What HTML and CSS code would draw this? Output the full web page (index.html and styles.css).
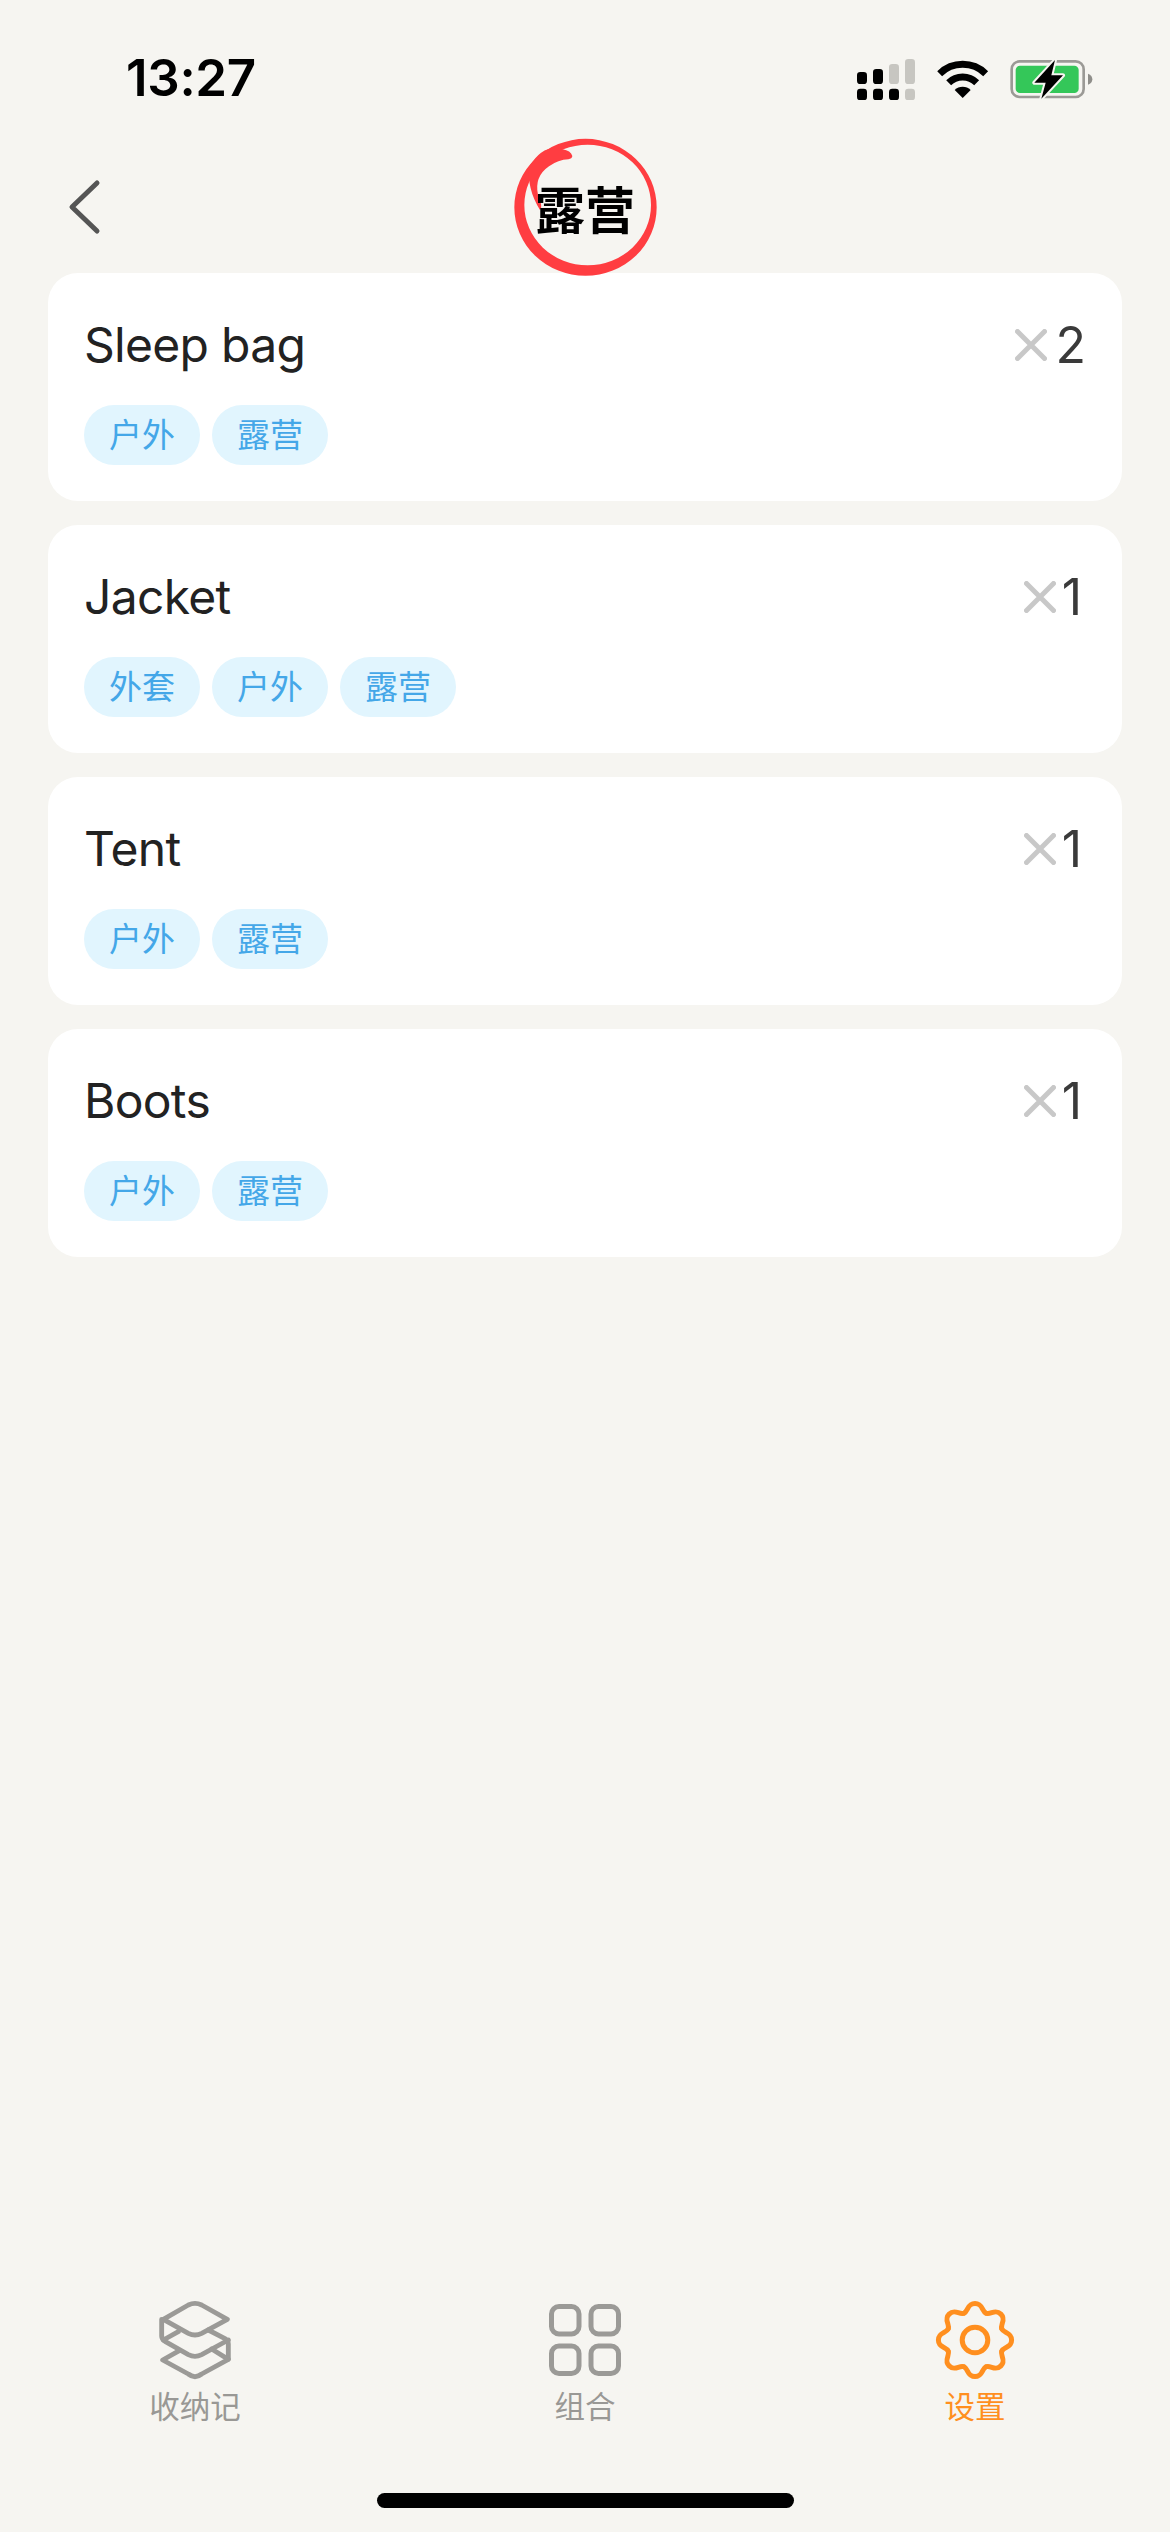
FILE: index.html
```html
<!DOCTYPE html>
<html lang="zh">
<head>
<meta charset="utf-8">
<title>露营</title>
<link rel="stylesheet" href="styles.css">
</head>
<body>
<div class="page">
  <div class="status">
    <span class="time">13:27</span>
    <svg class="status-icons" viewBox="222 78 720 126" width="240" height="42">
      <g fill="#000">
        <rect x="228" y="170" width="30" height="35" rx="10"/>
        <rect x="276" y="170" width="30" height="35" rx="10"/>
        <rect x="324" y="170" width="30" height="35" rx="10"/>
        <rect x="228" y="120" width="30" height="36" rx="10"/>
        <rect x="276" y="111" width="30" height="45" rx="10"/>
      </g>
      <g fill="#c7c6c1">
        <rect x="372" y="170" width="30" height="35" rx="10"/>
        <rect x="324" y="96" width="30" height="60" rx="10"/>
        <rect x="372" y="81" width="30" height="75" rx="10"/>
      </g>
      <g fill="none" stroke="#000" stroke-width="21">
        <path d="M476 125A99 99 0 0 1 614 125"/>
        <path d="M503 152A60 60 0 0 1 587 152"/>
      </g>
      <path d="M545 198L521 174A34 34 0 0 1 569 174Z" fill="#000"/>
      <rect x="692" y="88" width="216" height="107" rx="24" fill="none" stroke="#9b9a96" stroke-width="8"/>
      <rect x="704" y="101" width="189" height="82" rx="13" fill="#34c759"/>
      <path d="M921 125C930 128 934 135 934 142C934 149 930 155 921 158Z" fill="#8f8e8a"/>
      <path d="M822 84L760 152H794L781 200L846 130H811Z" fill="#000" stroke="#f6f5f1" stroke-width="12" stroke-linejoin="round" paint-order="stroke"/>
    </svg>
  </div>

  <header class="nav">
    <svg class="back" viewBox="0 0 40 60" width="40" height="60">
      <path d="M31 6L6 30L31 54" fill="none" stroke="#555" stroke-width="5" stroke-linecap="round" stroke-linejoin="round"/>
    </svg>
    <div class="nav-title">
      <svg class="scribble" viewBox="0 0 630 510" width="210" height="170">
        <path fill="#ff3d41" fill-rule="evenodd" d="M103 262A213 205 0 1 1 530 262A213 205 0 1 1 103 262ZM133 255A190 181 0 1 0 513 255A190 181 0 1 0 133 255Z"/>
        <path fill="#ff3d41" d="M277 108Q272 92 248 88Q190 70 148 140Q140 205 180 270Q190 262 174 225Q162 170 207 139Q235 119 265 118Q276 116 277 108Z"/>
      </svg>
      <h1>露营</h1>
    </div>
  </header>

  <main class="list">
    <article class="card">
      <div class="row">
        <span class="name">Sleep bag</span>
        <span class="qty">
          <svg class="times" viewBox="0 0 32 32" width="32" height="32"><path d="M2.5 2.5L29.5 29.5M29.5 2.5L2.5 29.5"/></svg>
          <span class="num">2</span>
        </span>
      </div>
      <div class="tags"><span class="tag">户外</span><span class="tag">露营</span></div>
    </article>
    <article class="card">
      <div class="row">
        <span class="name">Jacket</span>
        <span class="qty">
          <svg class="times" viewBox="0 0 32 32" width="32" height="32"><path d="M2.5 2.5L29.5 29.5M29.5 2.5L2.5 29.5"/></svg>
          <span class="num one">1</span>
        </span>
      </div>
      <div class="tags"><span class="tag">外套</span><span class="tag">户外</span><span class="tag">露营</span></div>
    </article>
    <article class="card">
      <div class="row">
        <span class="name">Tent</span>
        <span class="qty">
          <svg class="times" viewBox="0 0 32 32" width="32" height="32"><path d="M2.5 2.5L29.5 29.5M29.5 2.5L2.5 29.5"/></svg>
          <span class="num one">1</span>
        </span>
      </div>
      <div class="tags"><span class="tag">户外</span><span class="tag">露营</span></div>
    </article>
    <article class="card">
      <div class="row">
        <span class="name">Boots</span>
        <span class="qty">
          <svg class="times" viewBox="0 0 32 32" width="32" height="32"><path d="M2.5 2.5L29.5 29.5M29.5 2.5L2.5 29.5"/></svg>
          <span class="num one">1</span>
        </span>
      </div>
      <div class="tags"><span class="tag">户外</span><span class="tag">露营</span></div>
    </article>
  </main>

  <nav class="tabs">
    <div class="tab">
      <svg class="tab-icon" viewBox="105 60 240 240" width="80" height="80">
        <g fill="none" stroke="#9b9a97" stroke-width="14.5" stroke-linecap="round" stroke-linejoin="round">
          <path d="M205 75Q225 65 245 75L322 118L245 160Q225 170 205 160L130 118Z"/>
          <path d="M125 118V168Q125 177 135 184L205 224Q225 234 245 224L325 180"/>
          <path d="M130 180L175 155"/>
          <path d="M265 150L315 176Q325 182 325 192V238"/>
          <path d="M275 207L325 238L245 282Q225 298 205 282L128 240L178 212"/>
        </g>
      </svg>
      <span class="tab-label">收纳记</span>
    </div>
    <div class="tab">
      <svg class="tab-icon" viewBox="0 0 80 80" width="80" height="80">
        <g fill="none" stroke="#9b9a97" stroke-width="5">
          <rect x="6.5" y="6.5" width="27.5" height="27.5" rx="7.5"/>
          <rect x="46" y="6.5" width="27.5" height="27.5" rx="7.5"/>
          <rect x="6.5" y="46" width="27.5" height="27.5" rx="7.5"/>
          <rect x="46" y="46" width="27.5" height="27.5" rx="7.5"/>
        </g>
      </svg>
      <span class="tab-label">组合</span>
    </div>
    <div class="tab active">
      <svg class="tab-icon" viewBox="-40 -40 80 80" width="80" height="80">
        <defs>
          <path id="tooth" d="M-11.1 -26.8C-6.5 -28.7 -8 -36.6 0 -36.6C8 -36.6 6.5 -28.7 11.1 -26.8"/>
        </defs>
        <g fill="none" stroke="#ff8f1f" stroke-width="5" stroke-linecap="round">
          <use href="#tooth"/>
          <use href="#tooth" transform="rotate(45)"/>
          <use href="#tooth" transform="rotate(90)"/>
          <use href="#tooth" transform="rotate(135)"/>
          <use href="#tooth" transform="rotate(180)"/>
          <use href="#tooth" transform="rotate(225)"/>
          <use href="#tooth" transform="rotate(270)"/>
          <use href="#tooth" transform="rotate(315)"/>
          <circle r="12.8"/>
        </g>
      </svg>
      <span class="tab-label">设置</span>
    </div>
  </nav>
  <div class="home-bar"></div>
</div>
</body>
</html>
```

FILE: styles.css
```css
* { box-sizing: border-box; }
html, body { margin: 0; padding: 0; }
body {
  background: #f6f5f1;
  font-family: Inter, "Noto Sans CJK SC", sans-serif;
}
.page {
  width: 1170px;
  height: 2532px;
  display: flex;
  flex-direction: column;
  overflow: hidden;
}
.status {
  height: 147px;
  padding: 48px 75px 0 126px;
  display: flex;
  justify-content: space-between;
  align-items: flex-start;
}
.time {
  font-size: 51px;
  line-height: 60px;
  font-weight: 600;
  letter-spacing: -0.3px;
  color: #000;
}
.status-icons { margin-top: 10px; display: block; }
.nav {
  height: 120px;
  position: relative;
  z-index: 2;
  display: flex;
  align-items: center;
  justify-content: center;
}
.back {
  position: absolute;
  left: 66px;
  top: 30px;
}
.nav-title { position: relative; }
.nav-title h1 {
  position: relative;
  margin: 0;
  font-family: "Noto Sans CJK SC", sans-serif;
  font-size: 50px;
  line-height: 60px;
  font-weight: 700;
  color: #000;
}
.scribble {
  position: absolute;
  left: -55px;
  top: -57px;
}
.list {
  flex: 1;
  padding: 6px 48px 0;
  display: flex;
  flex-direction: column;
  gap: 24px;
}
.card {
  height: 228px;
  padding: 36px;
  background: #fff;
  border-radius: 30px;
  display: flex;
  flex-direction: column;
  gap: 24px;
}
.row {
  height: 72px;
  display: flex;
  justify-content: space-between;
  align-items: center;
}
.name {
  font-size: 48px;
  line-height: 72px;
  font-weight: 420;
  letter-spacing: -0.7px;
  color: #222;
}
.qty {
  display: flex;
  align-items: center;
  gap: 9px;
}
.times { display: block; }
.times path {
  fill: none;
  stroke: #c8c8c8;
  stroke-width: 5;
  stroke-linecap: round;
}
.num {
  font-size: 50px;
  line-height: 72px;
  font-weight: 420;
  color: #3a3a3a;
}
.num.one { margin: 0 4px 0 -3px; }
.tags {
  display: flex;
  gap: 12px;
}
.tag {
  height: 60px;
  padding: 0 25px;
  border-radius: 30px;
  background: #e1f5fe;
  color: #44a7e8;
  font-family: "Noto Sans CJK SC", sans-serif;
  font-size: 33px;
  line-height: 57px;
}
.tabs {
  display: flex;
}
.tab {
  flex: 1;
  display: flex;
  flex-direction: column;
  align-items: center;
  gap: 5px;
}
.tab-icon { display: block; }
.tab-label {
  font-family: "Noto Sans CJK SC", sans-serif;
  font-size: 30.5px;
  line-height: 40px;
  color: #999895;
}
.tab.active .tab-label { color: #ff8f1f; }
.home-bar {
  width: 417px;
  height: 15px;
  margin: 68px auto 24px;
  background: #000;
  border-radius: 8px;
}
```
